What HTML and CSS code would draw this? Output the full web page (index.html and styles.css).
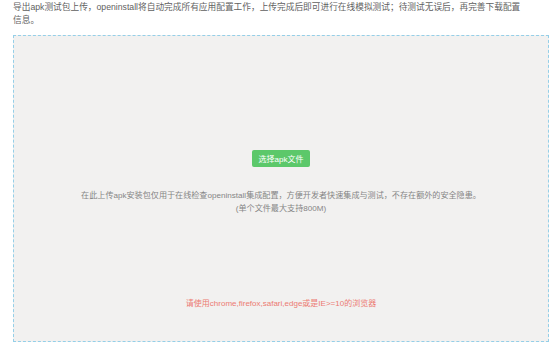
FILE: index.html
```html
<!DOCTYPE html>
<html lang="zh-CN">
<head>
  <meta charset="UTF-8">
  <title>上传apk测试包</title>
  <link rel="stylesheet" href="styles.css">
</head>
<body>
  <div class="page">
    <p class="intro">导出apk测试包上传，openinstall将自动完成所有应用配置工作，上传完成后即可进行在线模拟测试；待测试无误后，再完善下载配置信息。</p>

    <div class="upload-box">
      <button class="upload-button" type="button">选择apk文件</button>
      <p class="upload-tip">在此上传apk安装包仅用于在线检查openinstall集成配置，方便开发者快速集成与测试，不存在额外的安全隐患。<br>(单个文件最大支持800M)</p>
      <p class="browser-tip">请使用chrome,firefox,safari,edge或是IE&gt;=10的浏览器</p>
    </div>
  </div>
</body>
</html>
```

FILE: styles.css
```css
body {
  margin: 0;
  background: #fff;
  font-family: "Liberation Sans", "Noto Sans CJK SC", sans-serif;
}

.page {
  padding: 1px 4px 0 13px;
}

.intro {
  margin: 0;
  padding-right: 22px;
  font-size: 8.7px;
  line-height: 13px;
  color: #5f5f5f;
}

.upload-box {
  margin-top: 8px;
  height: 305px;
  border: 1px dashed #95cfe8;
  background-color: #f2f1f0;
  display: flex;
  flex-direction: column;
  align-items: center;
  text-align: center;
}

.upload-button {
  margin-top: 114px;
  width: 58px;
  height: 17px;
  padding: 0;
  border: none;
  border-radius: 2px;
  background-color: #5cc86a;
  color: #fff;
  font-family: inherit;
  font-size: 8px;
  cursor: pointer;
}

.upload-tip {
  margin: 22px 0 0;
  font-size: 8.1px;
  line-height: 13px;
  color: #858585;
}

.browser-tip {
  margin: 82px 0 0;
  font-size: 8px;
  line-height: 13px;
  color: #ec7b72;
}
```
